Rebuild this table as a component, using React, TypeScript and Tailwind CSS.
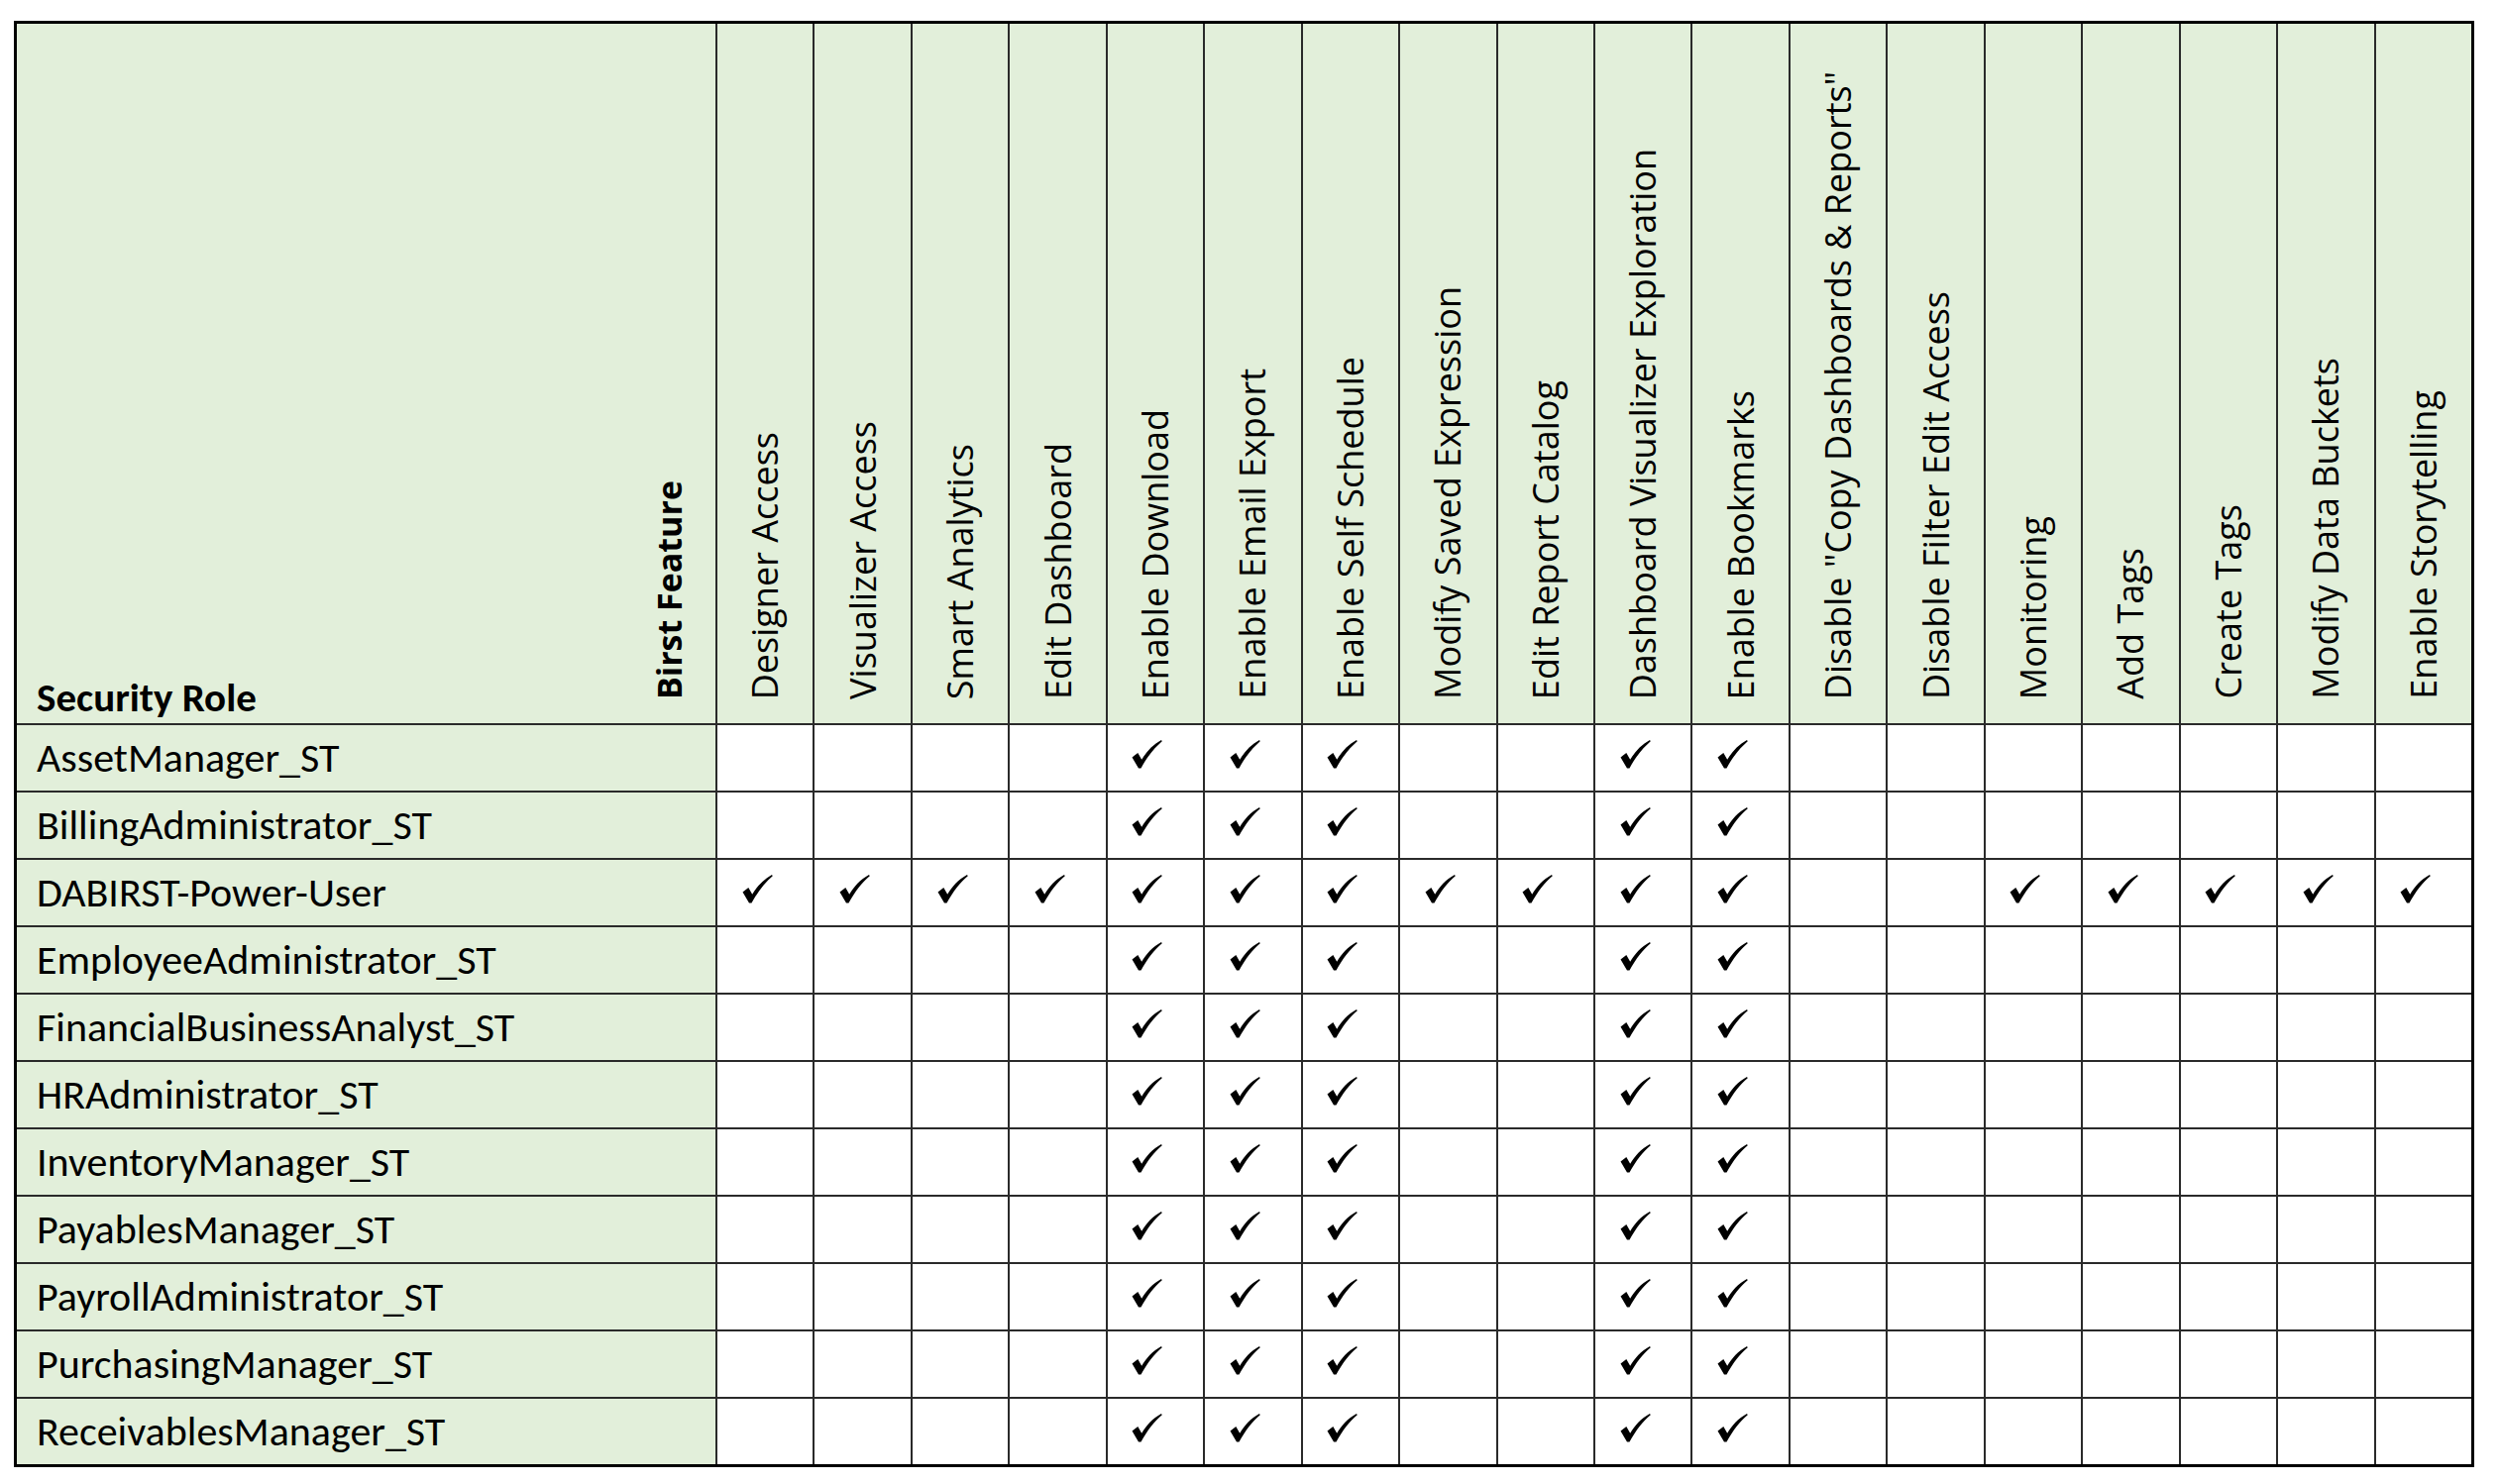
const features = [
  "Designer Access",
  "Visualizer Access",
  "Smart Analytics",
  "Edit Dashboard",
  "Enable Download",
  "Enable Email Export",
  "Enable Self Schedule",
  "Modify Saved Expression",
  "Edit Report Catalog",
  "Dashboard Visualizer Exploration",
  "Enable Bookmarks",
  'Disable "Copy Dashboards & Reports"',
  "Disable Filter Edit Access",
  "Monitoring",
  "Add Tags",
  "Create Tags",
  "Modify Data Buckets",
  "Enable Storytelling",
];

const standard = [4, 5, 6, 9, 10];
const powerUser = [0, 1, 2, 3, 4, 5, 6, 7, 8, 9, 10, 13, 14, 15, 16, 17];

const roles: { name: string; grants: number[] }[] = [
  { name: "AssetManager_ST", grants: standard },
  { name: "BillingAdministrator_ST", grants: standard },
  { name: "DABIRST-Power-User", grants: powerUser },
  { name: "EmployeeAdministrator_ST", grants: standard },
  { name: "FinancialBusinessAnalyst_ST", grants: standard },
  { name: "HRAdministrator_ST", grants: standard },
  { name: "InventoryManager_ST", grants: standard },
  { name: "PayablesManager_ST", grants: standard },
  { name: "PayrollAdministrator_ST", grants: standard },
  { name: "PurchasingManager_ST", grants: standard },
  { name: "ReceivablesManager_ST", grants: standard },
];

function Check() {
  return (
    <svg viewBox="0 0 32 30" className="w-[31px] h-[29px] mr-4 mb-2" fill="#000">
      <path d="M0.5 18 L6.5 13.5 L10.5 20.5 C15 12.5 22 5 31 0 L31.8 1.2 C24 8 16.5 17 9.8 29.5 L7.2 29.5 Z" />
    </svg>
  );
}

export default function App() {
  return (
    <div className="w-[2523px] h-[1498px] bg-white pt-[21px] pl-[14px]">
      <div className="w-[2483px] border-[3px] border-black bg-[#2a2a2a] grid grid-cols-[705px_repeat(18,minmax(0,1fr))] grid-rows-[706px_repeat(11,66px)] gap-[2px]">
        {/* header row */}
        <div className="bg-[#e2efda] flex items-end justify-between pl-5 pr-[30px] pb-[5px]">
          <span className="font-['Carlito','Lato',sans-serif] font-bold text-[41px] leading-none text-black">
            Security Role
          </span>
          <span className="font-['Open_Sans',sans-serif] font-bold text-[34px] leading-none text-black [writing-mode:vertical-rl] rotate-180 mb-[19px]">
            Birst Feature
          </span>
        </div>
        {features.map((f) => (
          <div key={f} className="bg-[#e2efda] flex items-end justify-center pb-[24px]">
            <span className="font-['Open_Sans',sans-serif] text-[36px] leading-none text-black whitespace-nowrap [writing-mode:vertical-rl] rotate-180">
              {f}
            </span>
          </div>
        ))}

        {/* role rows */}
        {roles.map((r) => (
          <>
            <div key={r.name} className="bg-[#e2efda] flex items-center pl-5">
              <span className="font-['Carlito','Lato',sans-serif] text-[42px] leading-none text-black whitespace-nowrap">
                {r.name}
              </span>
            </div>
            {features.map((f, i) => (
              <div key={r.name + f} className="bg-white flex items-center justify-center">
                {r.grants.includes(i) && <Check />}
              </div>
            ))}
          </>
        ))}
      </div>
    </div>
  );
}
